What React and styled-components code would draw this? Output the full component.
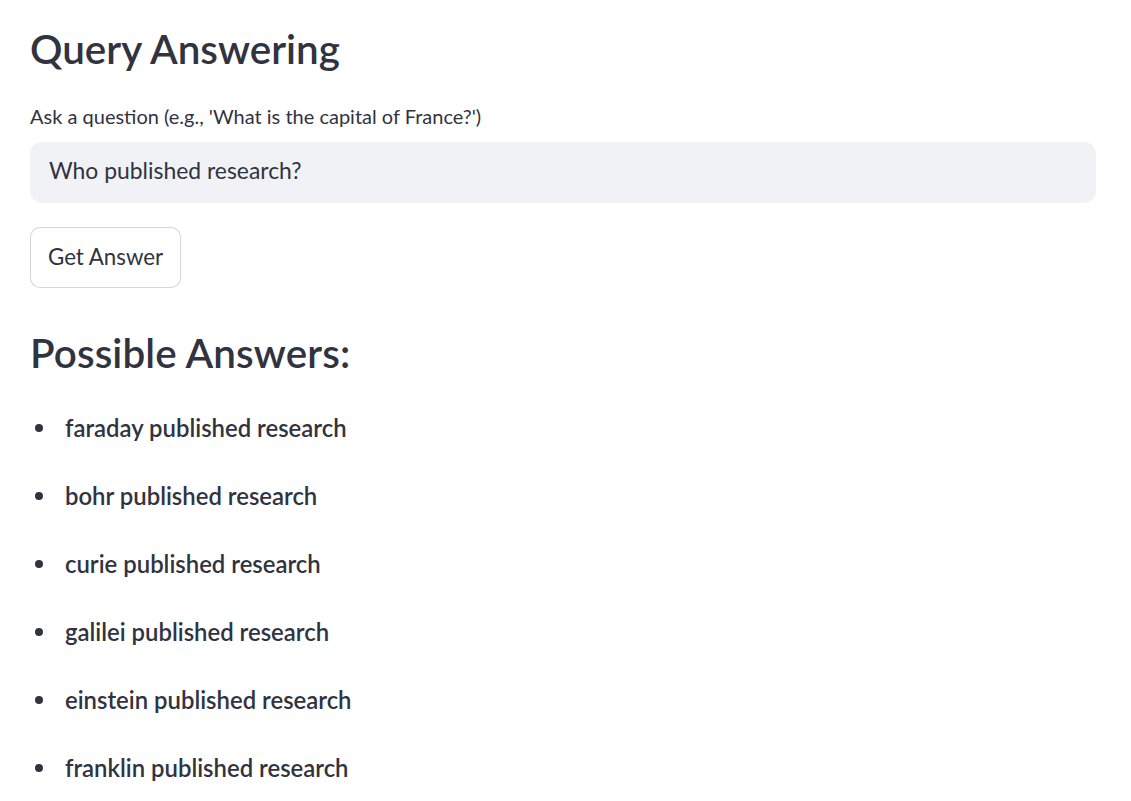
import styled, { createGlobalStyle } from 'styled-components'

const GlobalStyle = createGlobalStyle`
  html, body {
    margin: 0;
    padding: 0;
    background: #ffffff;
    color: #31333f;
    font-family: Lato, "Noto Sans", sans-serif;
  }
`

const Page = styled.main`
  display: flex;
  flex-direction: column;
  width: 1066px;
  padding: 25px 30px 0 30px;
`

const Title = styled.h1`
  margin: 0;
  font-size: 40.4px;
  font-weight: 600;
  line-height: 48px;
`

const Label = styled.label`
  margin-top: 31px;
  font-size: 20px;
  line-height: 24px;
`

const Input = styled.input`
  margin-top: 14px;
  height: 61px;
  box-sizing: border-box;
  border: none;
  border-radius: 12px;
  background: #f0f2f6;
  padding: 0 19px 5px 19px;
  font-family: inherit;
  font-size: 22.9px;
  color: #31333f;
  outline: none;
`

const Button = styled.button`
  align-self: flex-start;
  margin-top: 24px;
  height: 61px;
  padding: 0 17px 2px 17px;
  box-sizing: border-box;
  border: 1px solid rgba(49, 51, 63, 0.2);
  border-radius: 10px;
  background: #fff;
  font-family: inherit;
  font-size: 22.3px;
  color: #31333f;
`

const Subtitle = styled.h2`
  margin: 41px 0 0 0;
  font-size: 40.4px;
  font-weight: 600;
  line-height: 48px;
  letter-spacing: 0.1px;
`

const List = styled.ul`
  list-style: none;
  margin: 36px 0 0 0;
  padding: 0;
  display: flex;
  flex-direction: column;
  gap: 40px;
`

const Item = styled.li`
  display: flex;
  align-items: center;
  height: 28px;
  font-size: 23.9px;
  font-weight: 600;
  &::before {
    content: '';
    flex: none;
    width: 8px;
    height: 8px;
    border-radius: 50%;
    background: #31333f;
    margin: 1px 22px 0 5px;
  }
`

const answers = ['faraday', 'bohr', 'curie', 'galilei', 'einstein', 'franklin']

export default function App() {
  return (
    <>
      <GlobalStyle />
      <Page>
        <Title>Query Answering</Title>
        <Label>Ask a question (e.g., 'What is the capital of France?')</Label>
        <Input defaultValue="Who published research?" />
        <Button>Get Answer</Button>
        <Subtitle>Possible Answers:</Subtitle>
        <List>
          {answers.map(name => (
            <Item key={name}>{name} published research</Item>
          ))}
        </List>
      </Page>
    </>
  )
}
